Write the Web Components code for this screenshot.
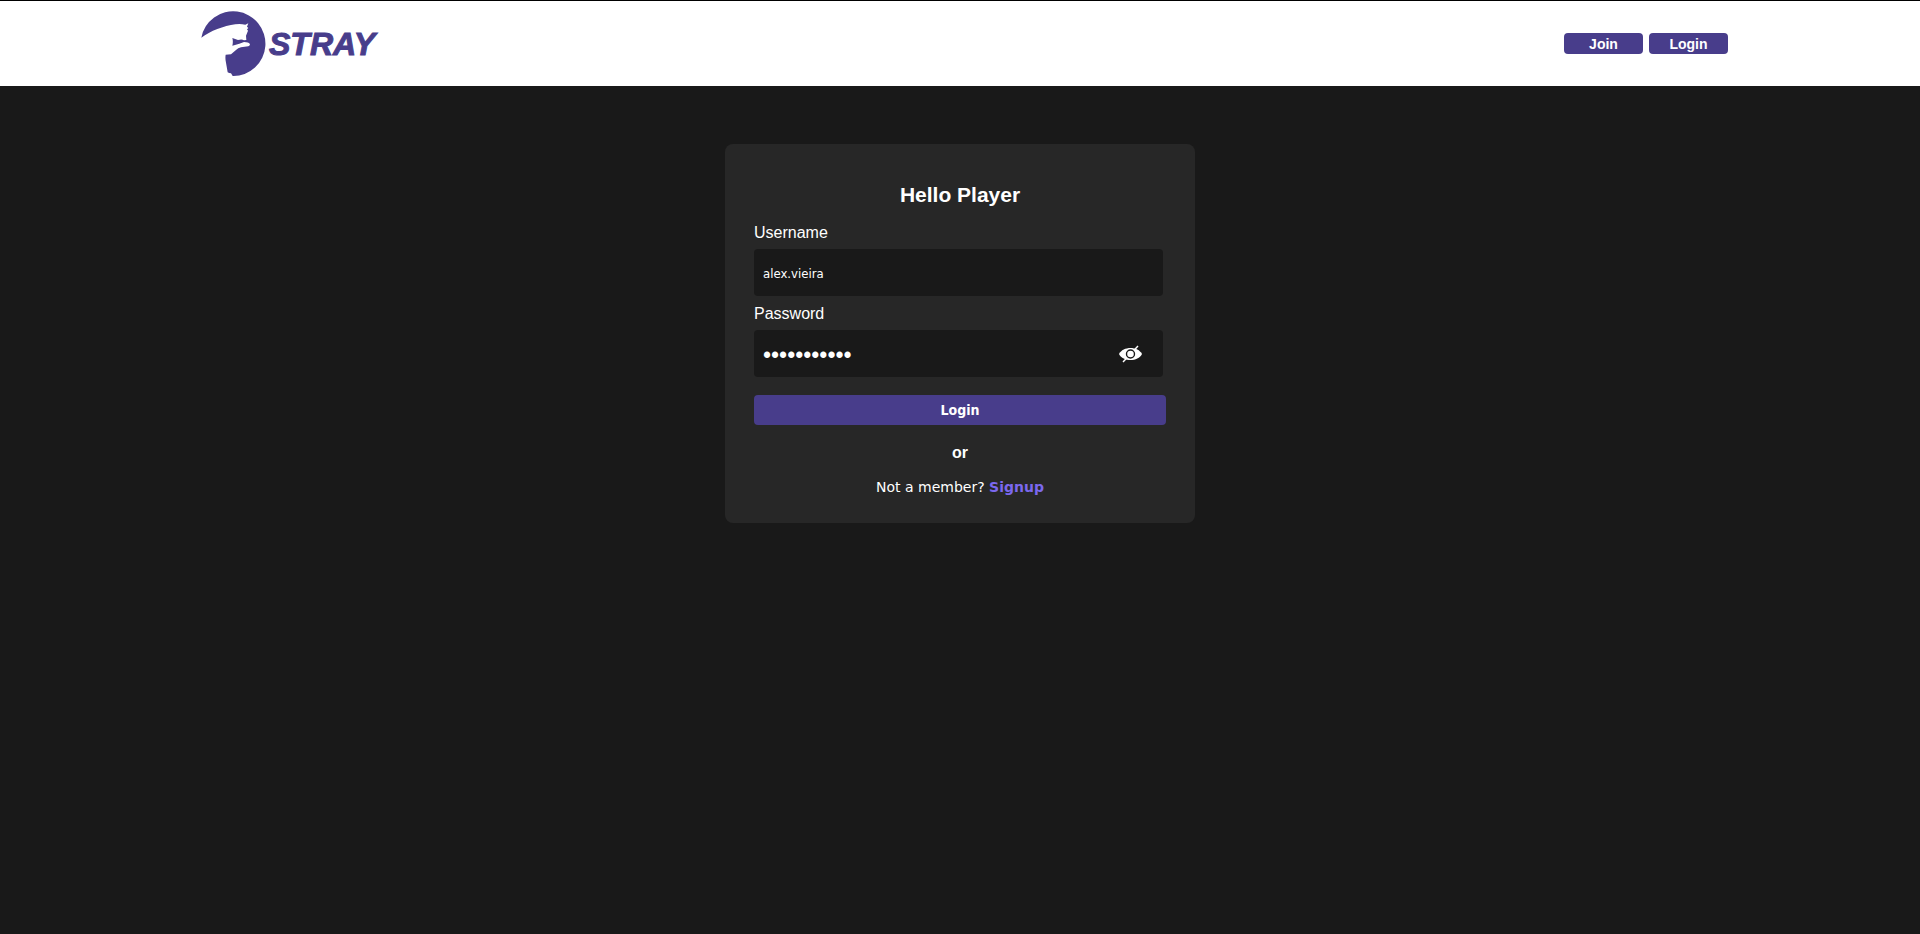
<!DOCTYPE html>
<html lang="en">
<head>
<meta charset="utf-8">
<title>Stray</title>
<style>
  html { background: #191919; }
  body { margin: 0; font-family: "Liberation Sans", Arial, sans-serif; color: #fff; }
</style>
</head>
<body>
<stray-header>
  <stray-logo></stray-logo>
  <nav-button slot="actions">Join</nav-button>
  <nav-button slot="actions">Login</nav-button>
</stray-header>
<login-card>
  <form-field label="Username" type="text" value="alex.vieira"></form-field>
  <form-field label="Password" type="password" value="player12345"></form-field>
</login-card>

<script>
function define(name, markup, setup) {
  const template = document.createElement('template');
  template.innerHTML = markup;
  customElements.define(name, class extends HTMLElement {
    constructor() {
      super();
      this.attachShadow({ mode: 'open' }).append(template.content.cloneNode(true));
    }
    connectedCallback() { if (setup) setup(this, this.shadowRoot); }
  });
}

define('stray-header', `
  <style>
    :host { display: block; border-top: 1px solid #000; background: #fff; }
    header { display: flex; align-items: center; justify-content: space-between; padding: 10px 10%; }
    nav { display: flex; gap: 6px; }
  </style>
  <header><slot></slot><nav><slot name="actions"></slot></nav></header>`);

define('stray-logo', `
  <style>
    :host { display: block; }
    a { display: flex; align-items: center; gap: 3px; padding-left: 9px; color: #483d8b; text-decoration: none; }
    svg { display: block; width: 65px; height: 65px; }
    span { font-size: 32px; line-height: 36px; font-weight: 700; font-style: italic; -webkit-text-stroke: 1px #483d8b; }
  </style>
  <a href="#">
    <svg viewBox="17 17 195 195" aria-hidden="true">
      <path fill="#483d8b" d="M18 97A97 97 0 1 1 112 212L107 204Q101 204 97 201L92 172Q89 160 91 148L107 147L122 134Q128 128 137 126L159 123Q166 119 163 115Q160 111 146 110L132 115L111 121Q114 109 111 98L128 104Q140 100 146 105L153 104L152 91L158 76L155 72L159 68L155 64L159 54L150 58Q135 55 120 57C85 62 45 77 18 97Z"/>
    </svg>
    <span>STRAY</span>
  </a>`);

define('nav-button', `
  <style>
    :host { display: block; }
    button { display: block; box-sizing: border-box; width: 79px; height: 21px; padding: 1px 0 0; border: 0; border-radius: 4px; background: #483d8b; color: #fff; font: 700 14px/20px "Liberation Sans", Arial, sans-serif; cursor: pointer; }
  </style>
  <button type="button"><slot></slot></button>`);

define('form-field', `
  <style>
    :host { display: block; }
    label { display: block; font-size: 16px; line-height: 20px; margin-bottom: 6px; }
    .box { display: flex; align-items: center; margin-right: 3px; border-radius: 4px; background: #191919; }
    input { flex: 1; min-width: 0; box-sizing: border-box; height: 47px; padding: 2px 9px 0; border: 0; outline: 0; background: none; color: #fff; font: 13px "DejaVu Sans Condensed", Tahoma, sans-serif; }
    input[type=password] { padding-top: 4px; font: 23px "Liberation Sans", Arial, sans-serif; }
    button { display: flex; margin-right: 20px; padding: 0; border: 0; background: none; cursor: pointer; }
    button[hidden] { display: none; }
  </style>
  <label for="field"></label>
  <div class="box">
    <input id="field">
    <button type="button" aria-label="Show password" hidden>
      <svg width="25" height="18" viewBox="0 0 25 18" aria-hidden="true">
        <path d="M1 9C5 1 20 1 24 9C20 17 5 17 1 9Z" fill="#fff"/>
        <path d="M5 17L20 1" stroke="#fff" stroke-width="1.4"/>
        <circle cx="12.5" cy="9" r="4" fill="#fff" stroke="#191919" stroke-width="1.4"/>
      </svg>
    </button>
  </div>`, (host, root) => {
  const input = root.querySelector('input');
  const toggle = root.querySelector('button');
  root.querySelector('label').textContent = host.getAttribute('label');
  input.type = host.getAttribute('type');
  input.value = host.getAttribute('value');
  toggle.hidden = input.type !== 'password';
  toggle.onclick = () => { input.type = input.type === 'password' ? 'text' : 'password'; };
});

define('login-card', `
  <style>
    :host { display: block; padding: 58px 16px; }
    form { box-sizing: border-box; max-width: 470px; margin: 0 auto; padding: 36px 29px 26px; border-radius: 8px; background: #272727; text-align: center; }
    h1 { margin: 0 0 14px; font-size: 21px; line-height: 29px; font-weight: 700; }
    .fields { display: grid; gap: 8px; margin-bottom: 18px; text-align: left; }
    button { display: block; width: 100%; height: 30px; margin-bottom: 18px; padding: 0; border: 0; border-radius: 4px; background: #483d8b; color: #fff; font: 700 14px "DejaVu Sans Condensed", Tahoma, sans-serif; cursor: pointer; }
    h2 { margin: 0 0 14px; font-size: 16px; line-height: 20px; font-weight: 700; }
    p { margin: 0; font: 14px/20px "DejaVu Sans", Verdana, sans-serif; }
    a { color: #7b68ee; font-weight: 700; text-decoration: none; }
  </style>
  <form>
    <h1>Hello Player</h1>
    <div class="fields"><slot></slot></div>
    <button type="button">Login</button>
    <h2>or</h2>
    <p>Not a member? <a href="#">Signup</a></p>
  </form>`);
</script>
</body>
</html>
